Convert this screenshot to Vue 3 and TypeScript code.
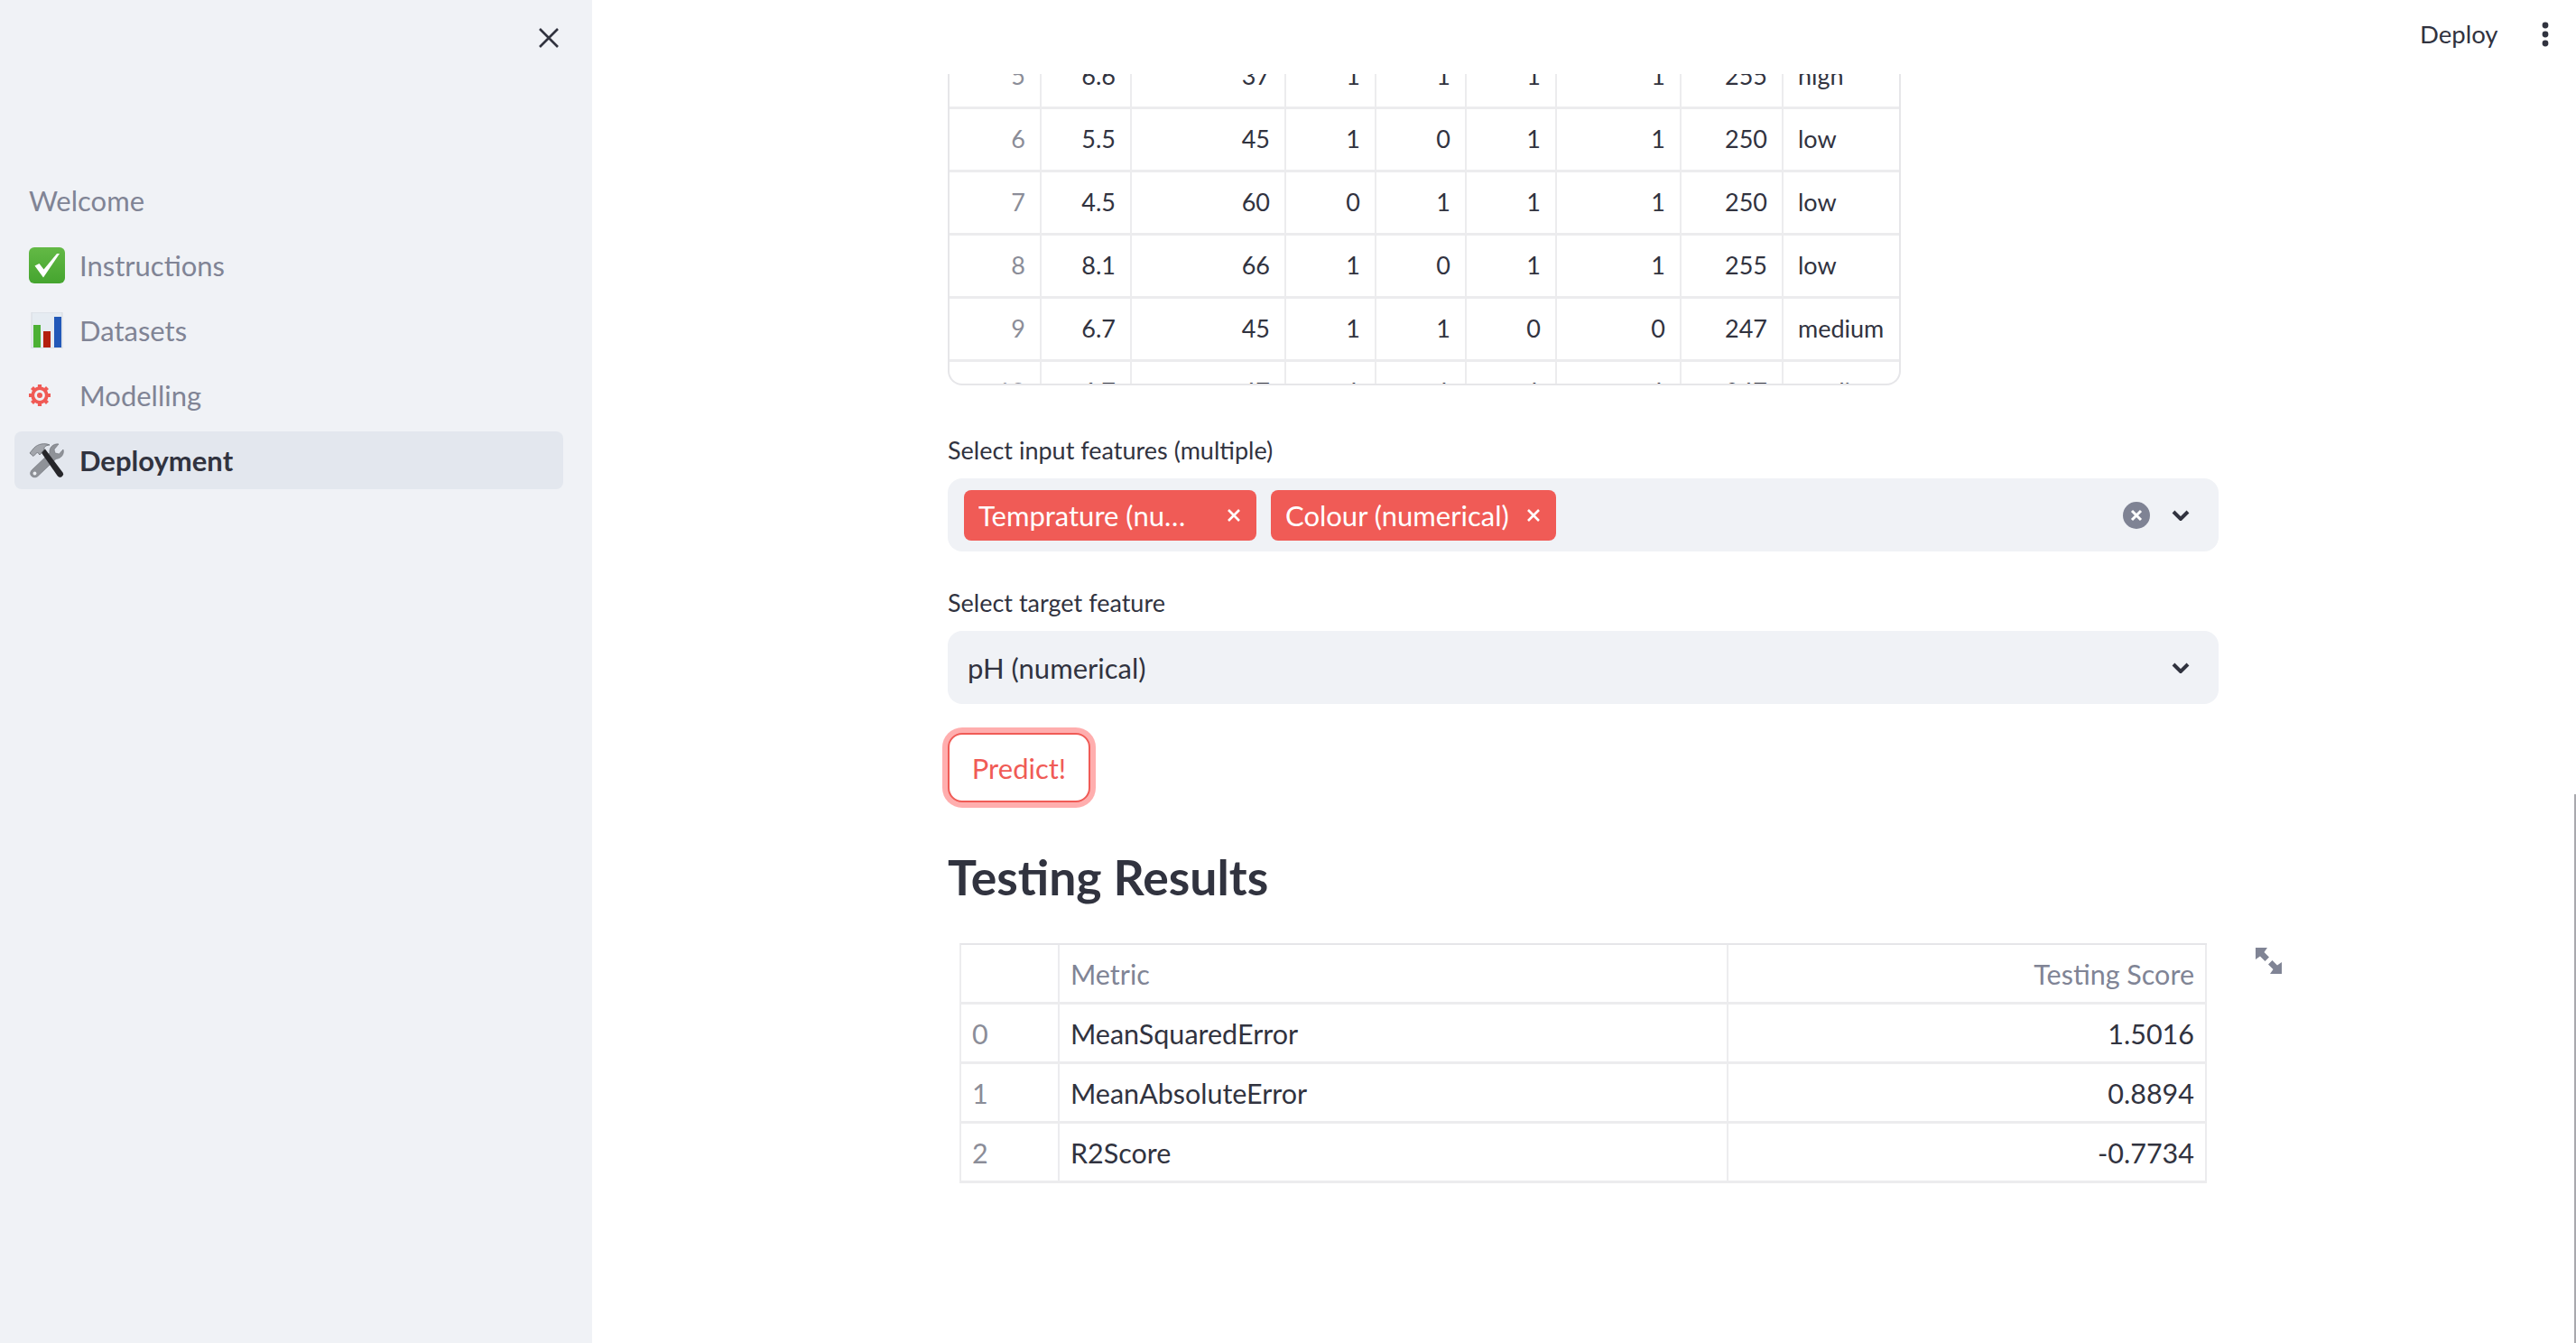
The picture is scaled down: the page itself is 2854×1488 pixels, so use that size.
<script setup lang="ts">
interface NavItem { label: string; icon: string; active?: boolean }
const nav: NavItem[] = [
  { label: 'Welcome', icon: '' },
  { label: 'Instructions', icon: 'check' },
  { label: 'Datasets', icon: 'chart' },
  { label: 'Modelling', icon: 'gear' },
  { label: 'Deployment', icon: 'tools', active: true },
]
const colWidths = [102, 100, 171, 100, 100, 100, 138, 113, 133]
const rows: string[][] = [
  ['5', '6.6', '37', '1', '1', '1', '1', '255', 'high'],
  ['6', '5.5', '45', '1', '0', '1', '1', '250', 'low'],
  ['7', '4.5', '60', '0', '1', '1', '1', '250', 'low'],
  ['8', '8.1', '66', '1', '0', '1', '1', '255', 'low'],
  ['9', '6.7', '45', '1', '1', '0', '0', '247', 'medium'],
  ['10', '6.7', '47', '1', '1', '1', '1', '247', 'medium'],
]
const results = [
  { i: 0, metric: 'MeanSquaredError', score: '1.5016' },
  { i: 1, metric: 'MeanAbsoluteError', score: '0.8894' },
  { i: 2, metric: 'R2Score', score: '-0.7734' },
]
</script>

<template>
  <div class="app">
    <aside class="sidebar">
      <div class="side-head">
        <svg class="close" viewBox="0 0 24 24" width="24" height="24"><path d="M2 2 22 22M22 2 2 22" fill="none" stroke="#31333f" stroke-width="2.6" /></svg>
      </div>
      <nav class="nav">
        <a v-for="n in nav" :key="n.label" class="nav-item" :class="{ active: n.active }">
          <span v-if="n.icon" class="nav-icon">
            <svg v-if="n.icon === 'check'" viewBox="0 0 40 40" width="40" height="40">
              <defs><linearGradient id="g1" x1="0" y1="0" x2="0" y2="1"><stop offset="0" stop-color="#63b945" /><stop offset="1" stop-color="#45a52f" /></linearGradient></defs>
              <rect x="0" y="0" width="40" height="40" rx="6" fill="url(#g1)" />
              <path d="M6.5 20.5 16 33.5 34 7 31 7 16.5 24.5 11.5 18Z" fill="#fff" />
            </svg>
            <svg v-else-if="n.icon === 'chart'" viewBox="0 0 40 40" width="40" height="40">
              <rect x="3" y="0" width="34" height="40" fill="#e6ecf2" stroke="#d5d9df" stroke-width="1" />
              <rect x="5" y="14" width="8" height="25" fill="#4cb034" />
              <rect x="16" y="21" width="8" height="18" fill="#b4200f" />
              <rect x="28" y="5" width="8" height="34" fill="#2258b8" />
            </svg>
            <svg v-else-if="n.icon === 'gear'" viewBox="0 0 24 24" width="24" height="24">
              <circle cx="12" cy="12" r="7.8" fill="none" stroke="#f05a55" stroke-width="3.800" />
              <circle cx="12" cy="12" r="3" fill="#f05a55" />
              <g stroke="#f05a55" stroke-width="4.2">
                <path d="M12 0V4.500M12 19.500V24M0 12H4.500M19.500 12H24M3.500 3.500 6 6M18 18 20.500 20.500M3.500 20.500 6 18M18 6 20.500 3.500" />
              </g>
            </svg>
            <svg v-else viewBox="0 0 40 40" width="40" height="40">
              <path d="M33 2 28 8 29 12 33.500 13 38 8C39.500 13 36 18 30 18.500L10 37.500C8 39.500 4 39 2.500 37 1 35 1.500 32.500 3.500 30.500L23 12C22 6 27 1 33 2Z" fill="#8f9298" stroke="#6f7278" stroke-width=".6" />
              <circle cx="6.500" cy="34.500" r="1.900" fill="#eceef2" />
              <path d="M13.500 11 18 7.500 37.500 33.500C38.800 35.500 37.800 37.500 36 38.500 34.300 39.300 32.800 38.700 31.500 37Z" fill="#26262a" />
              <path d="M1 12 5.500 6.500C10 1.500 18 .5 23 3 18 3.500 16.500 5.500 17 8L12 14 9.500 11 5 15.500Z" fill="#a3a6ac" stroke="#6a6d73" stroke-width=".8" />
            </svg>
          </span>
          <span class="nav-label">{{ n.label }}</span>
        </a>
      </nav>
    </aside>

    <main class="main">
      <header class="topbar">
        <span class="deploy">Deploy</span>
        <svg class="kebab" viewBox="0 0 8 28" width="8" height="28"><circle cx="4" cy="4" r="3.400" /><circle cx="4" cy="14" r="3.400" /><circle cx="4" cy="24" r="3.400" /></svg>
      </header>

      <div class="content">
        <div class="frame">
          <table class="data">
            <colgroup><col v-for="(w, i) in colWidths" :key="i" :style="{ width: w + 'px' }" /></colgroup>
            <tbody>
              <tr v-for="r in rows" :key="r[0]">
                <td v-for="(c, i) in r" :key="i" :class="{ idx: i === 0, txt: i === 8 }">{{ c }}</td>
              </tr>
            </tbody>
          </table>
        </div>

        <label class="field-label first">Select input features (multiple)</label>
        <div class="select multi">
          <span class="tag"><span class="tag-text t1">Temprature (numerical)</span><svg class="tag-x x1" viewBox="0 0 16 16" width="16" height="16"><path d="M2 2 14 14M14 2 2 14" /></svg></span>
          <span class="tag"><span class="tag-text">Colour (numerical)</span><svg class="tag-x" viewBox="0 0 16 16" width="16" height="16"><path d="M2 2 14 14M14 2 2 14" /></svg></span>
          <span class="spacer"></span>
          <svg class="clear" viewBox="0 0 30 30" width="30" height="30"><circle cx="15" cy="15" r="15" fill="#7f8394" /><path d="M10 10 20 20M20 10 10 20" stroke="#fff" stroke-width="3" /></svg>
          <svg class="chev" viewBox="0 0 20 12" width="20" height="12"><path d="M2 2 10 10 18 2" /></svg>
        </div>

        <label class="field-label">Select target feature</label>
        <div class="select single">
          <span class="value">pH (numerical)</span>
          <span class="spacer"></span>
          <svg class="chev" viewBox="0 0 20 12" width="20" height="12"><path d="M2 2 10 10 18 2" /></svg>
        </div>

        <button class="predict">Predict!</button>

        <h2 class="heading">Testing Results</h2>

        <div class="result-wrap">
          <table class="results">
            <thead>
              <tr><th class="c0"></th><th class="c1">Metric</th><th class="c2">Testing Score</th></tr>
            </thead>
            <tbody>
              <tr v-for="r in results" :key="r.i">
                <td class="c0 idx">{{ r.i }}</td><td class="c1">{{ r.metric }}</td><td class="c2">{{ r.score }}</td>
              </tr>
            </tbody>
          </table>
          <svg class="expand" viewBox="0 0 29 29" width="29" height="29">
            <path d="M0 0H13L9.500 5 15 10.500 10.500 15 5 9.500 0 13ZM29 29H16L19.500 24 14 18.500 18.500 14 24 19.500 29 16Z" fill="#808495" />
          </svg>
        </div>
      </div>
      <div class="scrollbar"></div>
    </main>
  </div>
</template>

<style>
html, body { margin: 0; background: #fff; }
</style>

<style scoped>
.app {
  display: flex;
  width: 2854px;
  height: 1488px;
  overflow: hidden;
  font-family: Lato, "Noto Sans", sans-serif;
  color: #31333f;
}
.sidebar { width: 656px; flex: none; background: #f0f2f6; box-sizing: border-box; padding: 30px 32px 0 16px; }
.side-head { display: flex; justify-content: flex-end; padding-right: 4px; height: 160px; }
.close { display: block; }
.nav { display: flex; flex-direction: column; gap: 8px; }
.nav-item { height: 64px; display: flex; align-items: center; padding-left: 16px; border-radius: 8px; font-size: 31px; color: #808495; }
.nav-item.active { background: #e3e7ee; color: #31333f; font-weight: 700; }
.nav-icon { width: 56px; flex: none; display: flex; align-items: center; }
.main { flex: 1; position: relative; overflow: hidden; }
.topbar { position: absolute; left: 0; right: 0; top: 0; height: 82px; background: #fff; z-index: 2; }
.deploy { position: absolute; left: 2025px; top: 20px; font-size: 27.5px; line-height: 36px; }
.kebab { position: absolute; left: 2160px; top: 24px; fill: #31333f; }
.content { padding-left: 394px; width: 1408px; }
.frame { height: 427px; width: 1056px; box-sizing: border-box; overflow: hidden; border: 2px solid #e6e6e9; border-top: 0; border-radius: 0 0 16px 16px; }
.data { border-collapse: separate; border-spacing: 0; table-layout: fixed; width: 1054px; margin-top: 51px; font-size: 27px; }
.data td { height: 70px; box-sizing: border-box; padding: 0 16px 3px 16px; text-align: right; border-right: 2px solid #ececee; border-bottom: 3px solid #ececee; }
.data td:last-child { border-right: 0; }
.data td.txt { text-align: left; }
.idx { color: #8b8d98; }
.field-label { display: block; font-size: 27px; line-height: 40px; }
.field-label.first { margin-top: 52px; }
.field-label:not(.first) { margin-top: 37px; }
.select { margin-top: 11px; height: 81px; background: #f0f2f6; border-radius: 16px; display: flex; align-items: center; box-sizing: border-box; }
.multi { padding: 0 32px 0 18px; gap: 16px; }
.single { padding: 0 32px 0 22px; }
.spacer { flex: 1; }
.tag { height: 56px; background: #f05b56; color: #fff; border-radius: 8px; display: inline-flex; align-items: center; padding: 0 17px 0 16px; font-size: 31px; box-sizing: border-box; }
.tag-text { white-space: nowrap; }
.t1 { width: 246px; overflow: hidden; text-overflow: ellipsis; }
.tag-x { margin-left: 19px; fill: none; stroke: #fff; stroke-width: 2.600; }
.x1 { margin-left: 29px; }
.multi .spacer { margin: 0 -16px; }
.clear { margin-right: 8px; }
.chev { fill: none; stroke: #31333f; stroke-width: 4; }
.value { font-size: 31px; }
.predict { display: block; margin: 32px 0 0; width: 158px; height: 77px; background: #fff; color: #f05b56; border: 2px solid #f05b56; border-radius: 16px; box-shadow: 0 0 0 6px rgba(255, 75, 75, .45); font: inherit; font-size: 31px; padding: 0; }
.heading { margin: 47px 0 0; font-size: 53.5px; line-height: 70px; font-weight: 700; }
.result-wrap { position: relative; margin: 39px 0 0 13px; width: 1382px; }
.results { border-collapse: separate; border-spacing: 0; table-layout: fixed; width: 1382px; font-size: 30.5px; border-top: 2px solid #e6e6e9; border-left: 2px solid #ececee; }
.results th, .results td { height: 66px; box-sizing: border-box; padding: 0 12px; font-weight: 400; border-right: 2px solid #ececee; border-bottom: 3px solid #ececee; text-align: left; }
.results th { color: #808495; }
.results .c0 { width: 109px; }
.results .c1 { width: 741px; }
.results .c2 { text-align: right; }
.expand { position: absolute; left: 1436px; top: 5px; }
.scrollbar { position: absolute; right: 0; top: 880px; width: 2px; height: 608px; background: #a9a9ae; }
</style>
